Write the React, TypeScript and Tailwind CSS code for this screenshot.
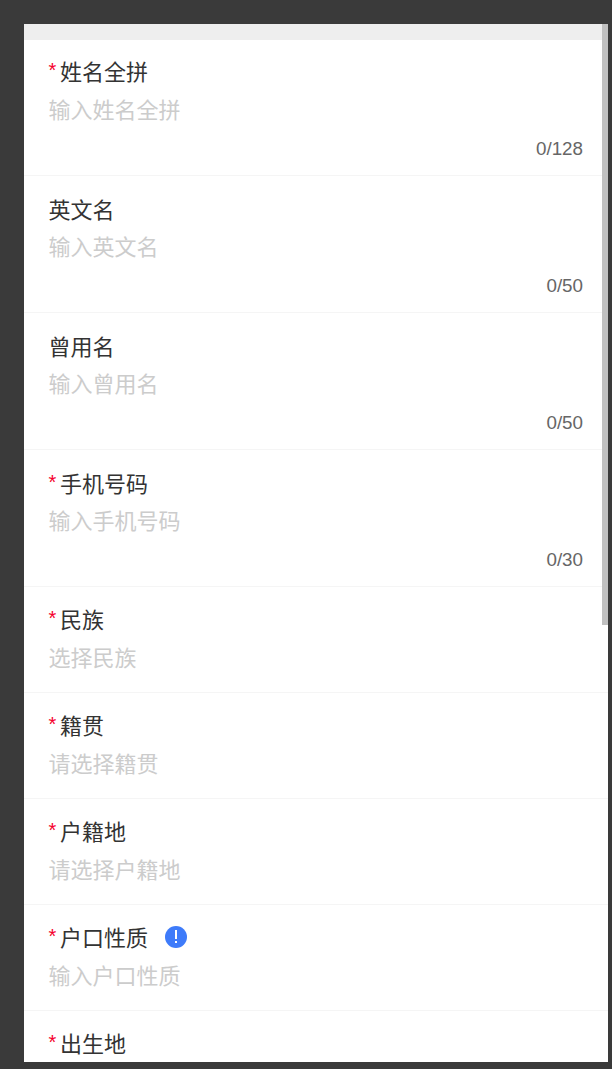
const rows = [
  { req: true, label: "姓名全拼", ph: "输入姓名全拼", count: "0/128" },
  { req: false, label: "英文名", ph: "输入英文名", count: "0/50" },
  { req: false, label: "曾用名", ph: "输入曾用名", count: "0/50" },
  { req: true, label: "手机号码", ph: "输入手机号码", count: "0/30" },
  { req: true, label: "民族", ph: "选择民族" },
  { req: true, label: "籍贯", ph: "请选择籍贯" },
  { req: true, label: "户籍地", ph: "请选择户籍地" },
  { req: true, label: "户口性质", ph: "输入户口性质", info: true },
  { req: true, label: "出生地" },
];

type RowData = { req: boolean; label: string; ph?: string; count?: string; info?: boolean };

function Row({ r, first }: { r: RowData; first: boolean }) {
  const spacing = first ? "pt-[14px] pb-[13px]" : r.count ? "pt-[16px] pb-[13px]" : "pt-[15px] pb-[19px]";
  return (
    <div className={`flex flex-col border-b border-[#f5f5f5] pl-[24.5px] pr-[25px] ${spacing}`}>
      <div className="flex h-[33px] items-center text-[22px] leading-[33px] text-[#333333]">
        {r.req && <span className="w-[11.5px] font-['Liberation_Sans'] text-[20px] text-[#f5002d]">*</span>}
        <span>{r.label}</span>
        {r.info && (
          <span className="ml-[17px] flex h-[22px] w-[22px] items-center justify-center rounded-full bg-[#3e7bfa]">
            <svg width="4" height="14" viewBox="0 0 4 14">
              <rect x="1" y="0" width="2" height="9" fill="#fff" />
              <rect x="1" y="11" width="2" height="2" fill="#fff" />
            </svg>
          </span>
        )}
      </div>
      {r.ph && (
        <div className={`${r.count && !first ? "mt-[4px]" : "mt-[5px]"} h-[33px] text-[22px] leading-[33px] text-[#cccccc]`}>
          {r.ph}
        </div>
      )}
      {r.count && (
        <div className="mt-[10px] h-[27px] text-right font-['Liberation_Sans'] text-[18.8px] leading-[27px] text-[#666666]">
          {r.count}
        </div>
      )}
    </div>
  );
}

export default function App() {
  return (
    <div className="h-[1069px] overflow-hidden bg-[#3a3a3a] pb-[7px] pl-[24px] pr-[4px] pt-[24px] font-['Noto_Sans_CJK_SC','Liberation_Sans',sans-serif]">
      <div className="relative h-full overflow-hidden bg-white">
        <div className="h-[16px] bg-[#eeeeee]" />
        {rows.map((r, i) => (
          <Row key={r.label} r={r} first={i === 0} />
        ))}
        <div className="absolute right-0 top-0 h-[601px] w-[6px] bg-[#c0c0c0]" />
      </div>
    </div>
  );
}
